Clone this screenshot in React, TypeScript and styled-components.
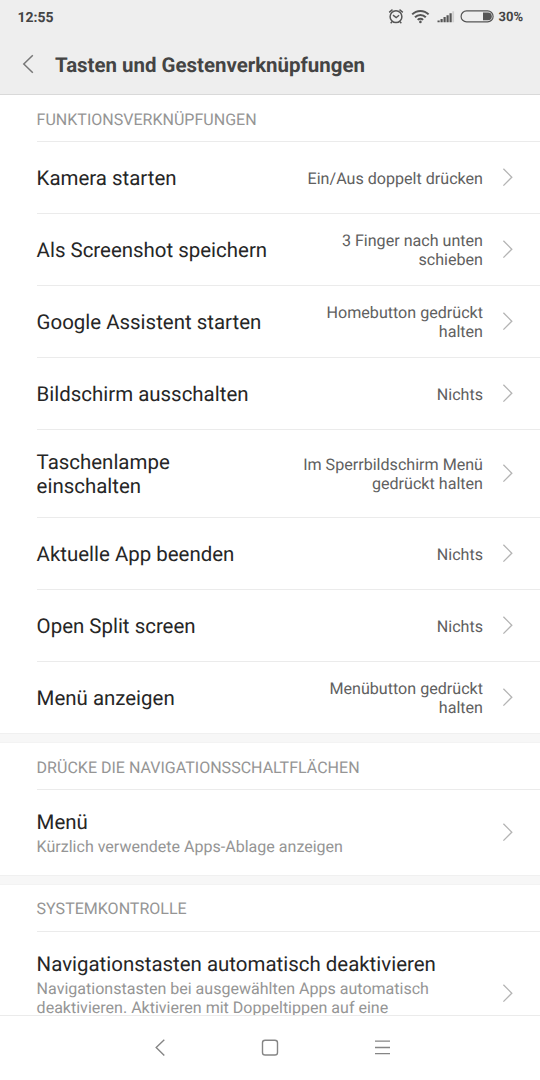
import React from 'react';
import styled, { createGlobalStyle } from 'styled-components';

const GlobalStyle = createGlobalStyle`
  * { box-sizing: border-box; }
  body { margin: 0; background: #fff; }
`;

const Screen = styled.div`
  width: 540px;
  height: 1080px;
  display: flex;
  flex-direction: column;
  overflow: hidden;
  background: #fff;
  font-family: Roboto, sans-serif;
  text-rendering: geometricPrecision;
`;

const TopArea = styled.header`
  flex: none;
  height: 95px;
  background: #eeeeee;
  border-bottom: 1px solid #d9d9d9;
`;

const StatusBar = styled.div`
  height: 34px;
  padding: 0 17px 0 17.5px;
  display: flex;
  align-items: center;
  color: #444;
  font-size: 14px;
  font-weight: 700;
`;

const Clock = styled.span`
  margin-right: auto;
  padding-top: 1px;
`;

const StatusIcons = styled.svg`
  margin-right: 3px;
`;

const Battery = styled.span`
  font-size: 13px;
`;

const TitleBar = styled.div`
  height: 60px;
  padding-left: 20px;
  display: flex;
  align-items: center;
`;

const Title = styled.h1`
  margin: 3px 0 0 19px;
  font-size: 20.45px;
  line-height: 25px;
  font-weight: 700;
  color: #444;
  white-space: nowrap;
`;

const Content = styled.main`
  flex: 1;
  min-height: 0;
  overflow: hidden;
`;

const Section = styled.section`
  padding-left: 36.6px;
`;

const Gap = styled.div`
  height: 10px;
  background: #f7f7f7;
  border-top: 1px solid #f0f0f0;
  border-bottom: 1px solid #f3f3f3;
`;

const Category = styled.h2<{ $raised?: boolean }>`
  margin: 0;
  height: 46px;
  padding-top: 1px;
  font-size: 16.05px;
  line-height: ${(p) => (p.$raised ? 45 : 47)}px;
  font-weight: 400;
  color: #959595;
  white-space: nowrap;
`;

const Row = styled.div<{ $height?: number }>`
  height: ${(p) => p.$height ?? 72}px;
  padding-right: 26px;
  border-top: 1px solid #ebebeb;
  display: flex;
  align-items: center;
`;

const Labels = styled.div<{ $width?: number }>`
  flex: none;
  width: ${(p) => (p.$width ? `${p.$width}px` : 'auto')};
  padding-top: 1px;
`;

const Label = styled.div`
  font-size: 20.45px;
  line-height: 24px;
  color: #262626;
`;

const Summary = styled.div`
  font-size: 16.05px;
  line-height: 19px;
  margin-top: 3px;
  color: #959595;
`;

const Value = styled.div`
  margin-left: auto;
  padding-top: 1px;
  width: 190px;
  text-align: right;
  font-size: 16.1px;
  line-height: 19px;
  color: #606060;
`;

const Arrow = styled.svg<{ $end?: boolean }>`
  flex: none;
  margin-left: ${(p) => (p.$end ? 'auto' : '19px')};
`;

const NavBar = styled.nav`
  flex: none;
  height: 65px;
  padding: 0 148px 2px;
  border-top: 1px solid #ebebeb;
  display: flex;
  align-items: center;
  justify-content: space-between;
`;

const Chevron = ({ end }: { end?: boolean }) => (
  <Arrow $end={end} width="12" height="20" viewBox="0 0 12 20" fill="none" stroke="#b4b4b4" strokeWidth="1.3">
    <path d="M1.4 0.8 9.8 9.2 1.4 17.6" />
  </Arrow>
);

const shortcuts: { label: string; value: string; tall?: boolean }[] = [
  { label: 'Kamera starten', value: 'Ein/Aus doppelt drücken' },
  { label: 'Als Screenshot speichern', value: '3 Finger nach unten schieben' },
  { label: 'Google Assistent starten', value: 'Homebutton gedrückt halten' },
  { label: 'Bildschirm ausschalten', value: 'Nichts' },
  { label: 'Taschenlampe einschalten', value: 'Im Sperrbildschirm Menü gedrückt halten', tall: true },
  { label: 'Aktuelle App beenden', value: 'Nichts' },
  { label: 'Open Split screen', value: 'Nichts' },
  { label: 'Menü anzeigen', value: 'Menübutton gedrückt halten' },
];

export default function App() {
  return (
    <Screen>
      <GlobalStyle />
      <TopArea>
        <StatusBar>
          <Clock>12:55</Clock>
          <StatusIcons width="108" height="20" viewBox="387 7 108 20" fill="none" stroke="#555">
            <circle cx="396" cy="16.7" r="5.9" strokeWidth="1.5" />
            <path d="M393 15.1l3.2 2.4 2.9-2.2M392 21.6l-1.3 1.7M400 21.6l1.3 1.7M389.2 12.4l3.3-2.8M402.8 12.4l-3.3-2.8" strokeWidth="1.4" />
            <path d="M412.2 14.4a11.4 11.4 0 0 1 16.4 0M415 17.2a7.6 7.6 0 0 1 10.8 0M417.7 19.9a3.9 3.9 0 0 1 5.4 0" strokeWidth="2" />
            <circle cx="420.4" cy="21.9" r="1.3" fill="#555" stroke="none" />
            <path d="M438.6 22.3v-1.8M441.6 22.3v-3.3M444.6 22.3v-5.2M447.6 22.3v-7M450.6 22.3v-9" strokeWidth="2.2" />
            <path d="M453.2 22.3v-11" stroke="#d0d0d0" strokeWidth="1.8" />
            <rect x="461.1" y="10.9" width="32" height="11" rx="5.5" strokeWidth="1.2" />
            <path d="M483 12.6h5a3.8 3.8 0 0 1 0 7.6h-5z" fill="#555" stroke="none" />
          </StatusIcons>
          <Battery>30%</Battery>
        </StatusBar>
        <TitleBar>
          <svg width="16" height="22" viewBox="0 0 16 22" fill="none" stroke="#777" strokeWidth="1.5">
            <path d="M12.8 2.3 3.8 11l9 8.8" />
          </svg>
          <Title>Tasten und Gestenverknüpfungen</Title>
        </TitleBar>
      </TopArea>
      <Content>
        <Section>
          <Category>FUNKTIONSVERKNÜPFUNGEN</Category>
          {shortcuts.map((s) => (
            <Row key={s.label} $height={s.tall ? 88 : 72}>
              <Labels $width={s.tall ? 150 : undefined}>
                <Label>{s.label}</Label>
              </Labels>
              <Value>{s.value}</Value>
              <Chevron />
            </Row>
          ))}
        </Section>
        <Gap />
        <Section>
          <Category>DRÜCKE DIE NAVIGATIONSSCHALTFLÄCHEN</Category>
          <Row $height={86}>
            <Labels>
              <Label>Menü</Label>
              <Summary>Kürzlich verwendete Apps-Ablage anzeigen</Summary>
            </Labels>
            <Chevron end />
          </Row>
        </Section>
        <Gap />
        <Section>
          <Category $raised>SYSTEMKONTROLLE</Category>
          <Row $height={124}>
            <Labels $width={420}>
              <Label>Navigationstasten automatisch deaktivieren</Label>
              <Summary>
                Navigationstasten bei ausgewählten Apps automatisch deaktivieren. Aktivieren mit Doppeltippen auf eine
                Navigationstaste
              </Summary>
            </Labels>
            <Chevron end />
          </Row>
        </Section>
      </Content>
      <NavBar>
        <svg width="22" height="22" viewBox="148 1036 22 22" fill="none" stroke="#858585" strokeWidth="1.4">
          <path d="M164.3 1039.8 156.2 1047.5l8.1 7.9" />
        </svg>
        <svg width="22" height="22" viewBox="259 1036 22 22" fill="none" stroke="#858585" strokeWidth="1.4">
          <rect x="262.5" y="1040.2" width="15" height="14.8" rx="2.6" />
        </svg>
        <svg width="22" height="22" viewBox="370 1036 22 22" fill="none" stroke="#858585" strokeWidth="1.3">
          <path d="M375 1041.2h15M375 1047.5h15M375 1053.6h15" />
        </svg>
      </NavBar>
    </Screen>
  );
}
